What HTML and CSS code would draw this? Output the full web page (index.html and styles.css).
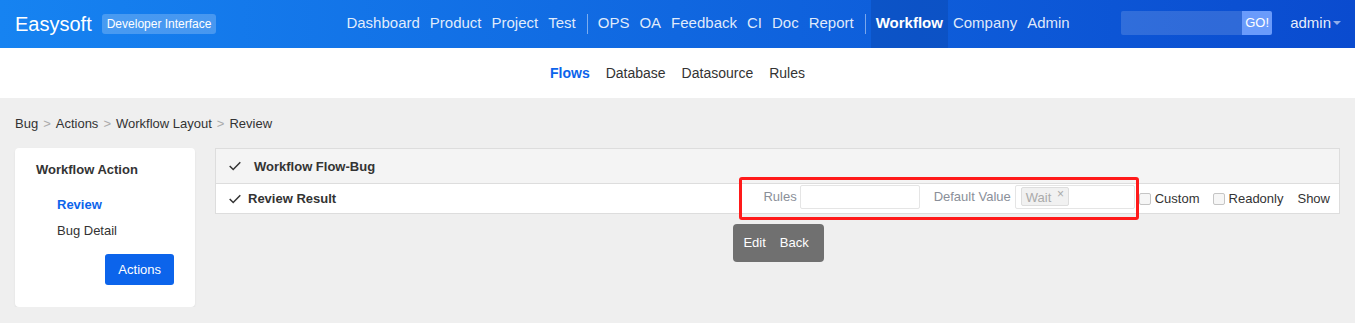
FILE: index.html
```html
<!DOCTYPE html>
<html lang="en">
<head>
    <meta charset="UTF-8">
    <title>Workflow Layout - Review</title>
    <link rel="stylesheet" href="styles.css">
</head>
<body>
    <header class="topbar">
        <a class="brand" href="#">Easysoft</a>
        <span class="badge">Developer Interface</span>
        <nav class="mainnav">
            <a href="#">Dashboard</a>
            <a href="#">Product</a>
            <a href="#">Project</a>
            <a href="#">Test</a>
            <span class="divider"></span>
            <a href="#">OPS</a>
            <a href="#">OA</a>
            <a href="#">Feedback</a>
            <a href="#">CI</a>
            <a href="#">Doc</a>
            <a href="#">Report</a>
            <span class="divider"></span>
            <a href="#" class="active">Workflow</a>
            <a href="#">Company</a>
            <a href="#">Admin</a>
        </nav>
        <form class="search">
            <input type="text">
            <button type="button">GO!</button>
        </form>
        <div class="user">admin<span class="caret"></span></div>
    </header>

    <div class="subnav">
        <a href="#" class="active">Flows</a>
        <a href="#">Database</a>
        <a href="#">Datasource</a>
        <a href="#">Rules</a>
    </div>

    <div class="breadcrumb">
        <a href="#">Bug</a><span class="sep">&gt;</span><a href="#">Actions</a><span class="sep">&gt;</span><a href="#">Workflow Layout</a><span class="sep">&gt;</span><span>Review</span>
    </div>

    <div class="content">
        <div class="side-card">
            <div class="side-title">Workflow Action</div>
            <ul class="side-menu">
                <li><a href="#" class="active">Review</a></li>
                <li><a href="#">Bug Detail</a></li>
            </ul>
            <div class="side-actions">
                <button class="btn-primary">Actions</button>
            </div>
        </div>

        <div class="panel">
            <div class="panel-heading">
                <svg class="check" width="12" height="10" viewBox="0 0 12 10"><polyline points="0.7,5 4.2,8.5 11.3,1.2" fill="none" stroke="#333" stroke-width="1.5"/></svg>
                <span>Workflow Flow-Bug</span>
            </div>
            <div class="field-row">
                <div class="field-name">
                    <svg class="check" width="12" height="10" viewBox="0 0 12 10"><polyline points="0.7,5 4.2,8.5 11.3,1.2" fill="none" stroke="#333" stroke-width="1.5"/></svg>
                    <span>Review Result</span>
                </div>
                <div class="field-options">
                    <div class="marked">
                        <label class="opt-label">Rules</label>
                        <input type="text" class="opt-input">
                        <label class="opt-label wide">Default Value</label>
                        <div class="opt-input chosen"><span class="chip">Wait <span class="chip-x">&times;</span></span></div>
                        <span class="mark"></span>
                        <div class="toolbar">
                            <a href="#">Edit</a>
                            <a href="#">Back</a>
                        </div>
                    </div>
                    <input type="checkbox" class="checkbox first">
                    <span class="check-label">Custom</span>
                    <input type="checkbox" class="checkbox">
                    <span class="check-label">Readonly</span>
                    <span class="show">Show</span>
                </div>
            </div>
        </div>
    </div>
</body>
</html>
```

FILE: styles.css
```css
body {
    margin: 0;
    font-family: 'Liberation Sans', Arial, sans-serif;
    font-size: 13px;
    color: #333;
    background-color: #efefef;
}
a {
    color: inherit;
    text-decoration: none;
}
.topbar {
    height: 48px;
    display: flex;
    align-items: center;
    padding: 0 14px 0 15px;
    background: linear-gradient(to right, #1683f1, #0a4bcf);
    color: #fff;
}
.brand {
    font-size: 20px;
    color: #fff;
}
.badge {
    margin-left: 10px;
    height: 20px;
    line-height: 20px;
    padding: 0 5px;
    font-size: 12px;
    border-radius: 3px;
    background-color: rgba(255, 255, 255, 0.22);
}
.mainnav {
    display: flex;
    align-items: center;
    height: 48px;
    margin-left: 125px;
}
.mainnav a {
    display: block;
    height: 48px;
    line-height: 45px;
    padding: 0 5px;
    font-size: 15px;
    color: rgba(255, 255, 255, 0.88);
}
.mainnav a.active {
    color: #fff;
    font-weight: bold;
    background-color: rgba(0, 20, 80, 0.14);
}
.mainnav .divider {
    width: 1px;
    height: 20px;
    margin: 0 5px 0 6px;
    background-color: rgba(255, 255, 255, 0.45);
}
.search {
    display: flex;
    margin: 0 0 3px auto;
}
.search input {
    width: 121px;
    height: 24px;
    box-sizing: border-box;
    border: none;
    border-radius: 2px 0 0 2px;
    background-color: rgba(255, 255, 255, 0.15);
}
.search button {
    width: 30px;
    height: 24px;
    border: none;
    border-radius: 0 2px 2px 0;
    padding: 0;
    font-family: inherit;
    font-size: 13px;
    color: #fff;
    background-color: #6a9bfb;
}
.user {
    margin: 0 0 3px 18px;
    font-size: 15px;
    color: rgba(255, 255, 255, 0.92);
    display: flex;
    align-items: center;
}
.caret {
    margin-left: 2px;
    border-top: 4px solid rgba(255, 255, 255, 0.55);
    border-left: 4px solid transparent;
    border-right: 4px solid transparent;
}
.subnav {
    height: 50px;
    display: flex;
    justify-content: center;
    align-items: center;
    background-color: #fff;
}
.subnav a {
    padding: 0 8px;
    font-size: 14px;
    color: #333;
}
.subnav a.active {
    color: #0c64eb;
    font-weight: bold;
}
.breadcrumb {
    height: 50px;
    line-height: 51px;
    padding: 0 15px;
}
.breadcrumb .sep {
    margin: 0 5px;
    color: #aaa;
}
.content {
    display: flex;
    align-items: flex-start;
    padding: 0 15px;
}
.side-card {
    width: 180px;
    box-sizing: border-box;
    padding: 12px 21px 22px;
    background-color: #fff;
    border-radius: 4px;
    box-shadow: 0 1px 2px rgba(0, 0, 0, 0.08);
}
.side-title {
    line-height: 20px;
    font-weight: bold;
}
.side-menu {
    list-style: none;
    margin: 12px 0 0;
    padding-left: 21px;
}
.side-menu li {
    line-height: 26px;
}
.side-menu a.active {
    color: #0c64eb;
    font-weight: bold;
}
.side-actions {
    display: flex;
    justify-content: flex-end;
    margin-top: 10px;
}
.btn-primary {
    height: 31px;
    padding: 0 13px;
    border: none;
    border-radius: 3px;
    font-family: inherit;
    font-size: 13px;
    color: #fff;
    background-color: #0c64eb;
}
.panel {
    flex: 1;
    margin-left: 20px;
    border: 1px solid #ddd;
    background-color: #fff;
}
.panel-heading {
    height: 34px;
    display: flex;
    align-items: center;
    padding-left: 13px;
    font-weight: bold;
    background-color: #f4f4f4;
    border-bottom: 1px solid #ddd;
}
.panel-heading .check {
    margin-right: 13px;
}
.field-row {
    height: 29px;
    display: flex;
    align-items: center;
    padding: 0 9px 0 13px;
}
.field-name {
    display: flex;
    align-items: center;
    font-weight: bold;
}
.field-name .check {
    margin-right: 7px;
}
.field-options {
    margin-left: auto;
    display: flex;
    align-items: center;
}
.marked {
    position: relative;
    display: flex;
    align-items: center;
    margin-bottom: 4px;
}
.opt-label {
    margin-right: 3px;
    color: #8a8f99;
}
.opt-label.wide {
    margin-left: 14px;
    margin-right: 4px;
}
.opt-input {
    width: 120px;
    height: 24px;
    box-sizing: border-box;
    margin: 0;
    border: 1px solid #e5e5e5;
    border-radius: 2px;
    background-color: #fff;
}
.chosen {
    display: flex;
    align-items: center;
    padding-left: 5px;
}
.chip {
    height: 19px;
    line-height: 19px;
    padding: 0 4px;
    box-sizing: border-box;
    border: 1px solid #ddd;
    border-radius: 2px;
    color: #aaa;
    background-color: #f1f1f1;
}
.chip-x {
    position: relative;
    top: -4px;
    margin-left: 2px;
    font-size: 12px;
}
.mark {
    position: absolute;
    left: -24px;
    right: -4px;
    top: -8px;
    bottom: -11px;
    border: 3px solid #ff1a1a;
    border-radius: 3px;
}
.toolbar {
    position: absolute;
    left: -30px;
    top: 39px;
    height: 38px;
    display: flex;
    align-items: center;
    padding: 0 8px 0 3px;
    border-radius: 4px;
    background-color: #707070;
}
.toolbar a {
    padding: 0 7px;
    color: #fff;
}
.checkbox {
    appearance: none;
    width: 12px;
    height: 12px;
    margin: 0 4px 0 13px;
    border: 1px solid #c5c5c5;
    border-radius: 2px;
    background-color: #f6f6f6;
}
.checkbox.first {
    margin-left: 4px;
}
.show {
    margin-left: 14px;
}
```
